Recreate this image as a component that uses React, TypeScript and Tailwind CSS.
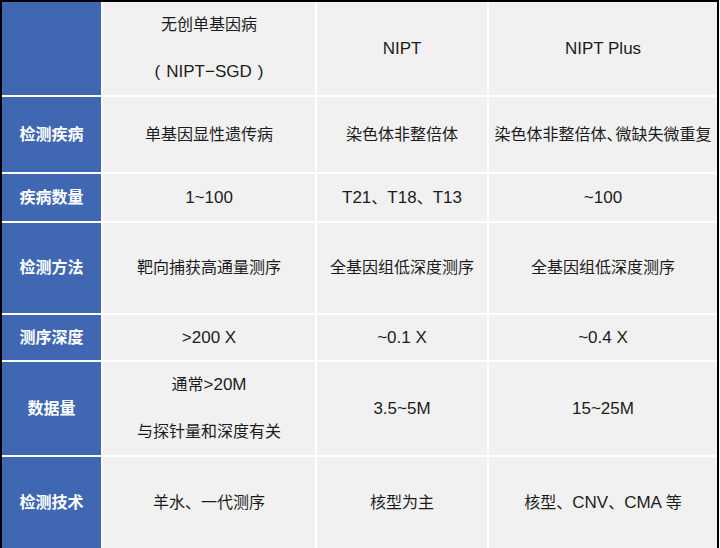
import React from 'react';

type Cell = string | string[];

const rows: { label: string; cells: Cell[] }[] = [
  { label: '', cells: [['无创单基因病', '(NIPT−SGD)'], 'NIPT', 'NIPT Plus'] },
  { label: '检测疾病', cells: ['单基因显性遗传病', '染色体非整倍体', '染色体非整倍体|、|微缺失微重复'] },
  { label: '疾病数量', cells: ['1~100', 'T21、T18、T13', '~100'] },
  { label: '检测方法', cells: ['靶向捕获高通量测序', '全基因组低深度测序', '全基因组低深度测序'] },
  { label: '测序深度', cells: ['>200 X', '~0.1 X', '~0.4 X'] },
  { label: '数据量', cells: [['通常>20M', '与探针量和深度有关'], '3.5~5M', '15~25M'] },
  { label: '检测技术', cells: ['羊水、一代测序', '核型为主', '核型、CNV、CMA 等'] },
];

const CJK = /[\u3000-\u9fff\uff00-\uffef]/;

// latin runs are set a touch larger, like the source rendering;
// "|、|" marks a squeezed (half width) comma, parens get the wide look
function Mixed({ text }: { text: string }) {
  const chunks = text.split('|');
  return (
    <>
      {chunks.map((chunk, k) => {
        if (chunk === '、' && chunks.length > 1) {
          return (
            <span key={k} className="tracking-[-7px]">
              、
            </span>
          );
        }
        const parts = chunk.match(/[\u3000-\u9fff\uff00-\uffef]+|[()]|[^\u3000-\u9fff\uff00-\uffef()]+/g) || [];
        return parts.map((p, i) => {
          if (p === '(') return <span key={`${k}-${i}`} className="text-[17px] mr-[6px]">(</span>;
          if (p === ')') return <span key={`${k}-${i}`} className="text-[17px] ml-[6px]">)</span>;
          return CJK.test(p) ? (
            <span key={`${k}-${i}`}>{p}</span>
          ) : (
            <span key={`${k}-${i}`} className="text-[17px]">{p}</span>
          );
        });
      })}
    </>
  );
}

export default function App() {
  return (
    <div className="w-[720px] h-[548px] overflow-hidden bg-white">
      <div
        className="w-[719px] border-l-2 border-t-2 border-r-2 border-black bg-white grid grid-cols-[99px_212px_170px_228px] grid-rows-[93px_75px_47px_90px_45px_93px_91px] gap-[2px] text-[16px] text-[#1c1c1c]"
        style={{ fontFamily: '"Liberation Sans", "Noto Sans CJK SC", sans-serif' }}
      >
        {rows.map((row, r) => (
          <React.Fragment key={r}>
            <div className="bg-[#4068b2] flex items-center justify-center text-white font-bold text-[16px]">
              {row.label}
            </div>
            {row.cells.map((c, i) => (
              <div key={i} className="bg-[#f1f1f1] flex flex-col items-center justify-center gap-[23px] whitespace-nowrap">
                {(Array.isArray(c) ? c : [c]).map((line, j) => (
                  <div key={j} className="leading-[24px]">
                    <Mixed text={line} />
                  </div>
                ))}
              </div>
            ))}
          </React.Fragment>
        ))}
      </div>
    </div>
  );
}
